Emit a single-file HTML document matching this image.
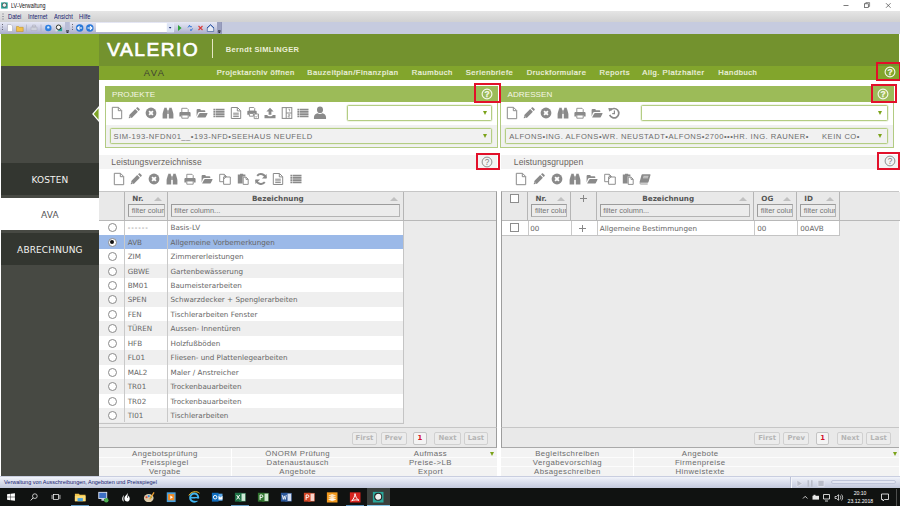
<!DOCTYPE html>
<html lang="de"><head><meta charset="utf-8"><title>LV-Verwaltung</title>
<style>
html,body{margin:0;padding:0;}
body{width:900px;height:506px;position:relative;overflow:hidden;background:#fff;font-family:"Liberation Sans",sans-serif;}
div,span,svg{position:absolute;box-sizing:border-box;}
.ic{overflow:visible}
.t{white-space:nowrap;line-height:1;}
/* windows chrome */
#title{left:0;top:0;width:900px;height:11px;background:#fff;}
#title .t{left:10.9px;top:2.6px;font-size:6.5px;color:#111;transform:scaleX(.83);transform-origin:0 0}
#menu{left:0;top:10.8px;width:900px;height:11px;background:linear-gradient(#e5e5e5,#d1d1d1);}
#menu .t{top:3px;font-size:6.3px;color:#14206e;transform:scaleX(.91);transform-origin:0 0}
#tool{left:0;top:21.7px;width:900px;height:12px;background:#c6cbdf;}
#tool .seg{left:0;top:0;width:221.5px;height:12px;background:linear-gradient(#e6e8f5,#cdd0e4 45%,#a9acc9);border-right:1px solid #8a8fae}
#combo{left:96px;top:1.1px;width:78px;height:9.4px;background:#fff;}
/* header */
#sgreen{left:1px;top:33.7px;width:97.7px;height:32px;background:#82a62b;}
#head{left:98.7px;top:33.7px;width:800.3px;height:32px;background:#73922e;}
#logo{left:107.3px;top:38.8px;font-size:19.2px;color:#fff;letter-spacing:1.45px;-webkit-text-stroke:.7px #fff;line-height:22px;white-space:nowrap;}
#vline{left:212.3px;top:39.3px;width:1px;height:19px;background:#e6e6c4;}
#user{left:225.7px;top:45.6px;font-size:7.5px;font-weight:bold;color:#ecefd8;letter-spacing:.36px;}
#nav{left:98.7px;top:65.6px;width:800.3px;height:14.2px;background:#82a52c;}
#navava{left:143.7px;top:69.2px;font-size:9.3px;color:#3e4132;letter-spacing:1.5px;}
.nv{top:68.9px;font-size:7.6px;color:#f0f3e0;letter-spacing:.56px;white-space:nowrap;line-height:1;-webkit-text-stroke:.2px #f0f3e0;}
/* sidebar */
#side{left:1px;top:65.6px;width:97.7px;height:410px;background:#474943;}
.sb{left:1px;width:97.7px;height:32px;background:#333630;color:#f4f4f0;font-family:"DejaVu Sans","Liberation Sans",sans-serif;font-size:9px;text-align:center;line-height:34.2px;letter-spacing:.12px;text-indent:.12px}
.sb.act{background:#fff;color:#555;}
/* panels */
.ph{height:15.5px;background:#9cbb58;}
.ph .t{left:7px;top:4.9px;font-size:8.1px;color:#f4f6e6;letter-spacing:.05px;}
.pb{border:1px solid #b2cb82;border-top:none;background:#fff;}
.prow{left:0;right:0;bottom:0;background:#f1f1f1;}
.selx{height:15.5px;border:1px solid #b4cd84;border-radius:1.6px;background:#fff;box-shadow:0 0 0 .6px #e2ebcf;}
.selx.g{background:#f1f1f1}
.selx .t{left:3px;top:3.7px;font-size:7.6px;color:#6c6c6c;letter-spacing:.5px;}
.arr{width:0;height:0;border-left:2.9px solid transparent;border-right:2.9px solid transparent;border-top:4.7px solid #7ba31a;}
.red{border:2.3px solid #e2102a;z-index:5}
.lab{height:14px;background:#f3f3f3;}
.lab .t{top:3px;font-size:8.5px;color:#6a645e;letter-spacing:.12px;}
/* tables */
.tbl{background:#ebebeb;border-top:1.3px solid #c6c6c6;}
.th{z-index:2;background:#e9e9e9;border-right:1px solid #b5b5b5;border-bottom:1.3px solid #b8b8b8;top:0;height:29.4px;}
.th b{position:absolute;top:3.1px;font-family:"DejaVu Sans","Liberation Sans",sans-serif;font-size:7.2px;color:#555;line-height:1;white-space:nowrap;}
.sort{width:0;height:0;border-left:4px solid transparent;border-right:4px solid transparent;border-bottom:4.2px solid #c0c0c0;top:5.4px;}
.fi{top:12px;height:13px;border:1px solid #9c9c9c;border-right-color:#b4b4b4;border-bottom-color:#b4b4b4;background:#ececec;overflow:hidden;}
.fi .t{left:2.6px;top:2.1px;font-size:7.4px;color:#757575;}
.row{left:0;width:304.5px;}
.row.wh{background:#fff} .row.alt{background:#efefef} .row.sel{background:#9bb9e8}
.row span.c1,.row span.c2{top:3.7px;font-family:"DejaVu Sans","Liberation Sans",sans-serif;font-size:7.2px;color:#666;line-height:1;white-space:nowrap;}
.row .c1{left:29.2px} .row .c2{left:72px}
.row::before{content:"";position:absolute;left:25.3px;top:0;bottom:0;width:1px;background:#c9c9c9}
.row::after{content:"";position:absolute;left:68.4px;top:0;bottom:0;width:1px;background:#c9c9c9}
.radio{left:9.1px;top:2.6px;width:9px;height:9px;border-radius:50%;border:1px solid #8a8a8a;background:#fff;}
.radio.on::after{content:"";position:absolute;left:1.3px;top:1.3px;width:4.4px;height:4.4px;border-radius:50%;background:#111}
.plus{position:absolute;width:7px;height:7px;background:linear-gradient(#878787,#878787) 0 2.8px/7px 1.4px no-repeat,linear-gradient(#878787,#878787) 2.8px 0/1.4px 7px no-repeat}
.cb{width:9px;height:9px;border:1px solid #8d8d8d;background:#fff;}
.pgr{height:20.5px;background:#e9e9e9;border-top:1.5px solid #c6c6c6;border-bottom:1.4px solid #a9a9a9;}
.pg{top:5.4px;height:12.2px;border:1px solid #d0d0d0;border-radius:2px;background:#ececec;color:#b4b4b4;font-family:"DejaVu Sans","Liberation Sans",sans-serif;font-weight:bold;font-size:6.9px;text-align:center;line-height:10.4px;}
.pg.cur{color:#d3122a;background:#f4f4f4;border-color:#c4c4c4}
.bl{height:9px;font-size:7.8px;line-height:9.3px;color:#6c6c6c;letter-spacing:.42px;text-align:center;white-space:nowrap;}
.blbg{height:9px;background:#f3f3f3;}
.rt{top:4.6px;font-family:"DejaVu Sans","Liberation Sans",sans-serif;font-size:7.2px;color:#666}
/* status + taskbar */
#status{left:0;top:475.5px;width:900px;height:12.8px;background:linear-gradient(#f2f4fa,#dfe3f0 35%,#c3c9dd);border-top:1px solid #c9cee0;}
#status .t{left:4px;top:3.6px;font-size:5.5px;color:#14206e;}
#task{left:0;top:488.2px;width:900px;height:17.8px;background:#101211;}
.tray{color:#fff;font-size:5.1px;white-space:nowrap;line-height:1;}
</style></head><body>

<div id="title"><svg class="ic" style="left:1.3px;top:2px" width="6.8" height="6.6" viewBox="0 0 8 8"><rect x="0" y=".5" width="8" height="7.5" fill="#2aa79b"/><circle cx="4" cy="3.8" r="2.6" fill="#f2f2f2" stroke="#333" stroke-width=".8"/></svg><span class="t">LV-Verwaltung</span>
<svg class="ic" style="left:838px;top:0" width="62" height="11" viewBox="0 0 62 11"><path d="M5.5 5.5h5" stroke="#444" stroke-width=".7"/><rect x="26.5" y="3.8" width="3.8" height="3.8" fill="none" stroke="#444" stroke-width=".7"/><path d="M27.8 3.8v-1.2h3.8v3.8h-1.2" fill="none" stroke="#444" stroke-width=".6"/><path d="M48 3.2l4.6 4.6M52.6 3.2l-4.6 4.6" stroke="#444" stroke-width=".7"/></svg></div>
<div id="menu"><span class="t" style="left:8px">Datei</span><span class="t" style="left:27.8px">Internet</span><span class="t" style="left:54px">Ansicht</span><span class="t" style="left:78.8px">Hilfe</span>
<svg class="ic" style="left:1.5px;top:2px" width="2" height="8" viewBox="0 0 2 8"><path d="M1 .5v1M1 3v1M1 5.5v1" stroke="#667" stroke-width="1"/></svg></div>
<div id="tool"><div class="seg"></div><div id="combo"></div>
<svg class="ic" style="left:0;top:0" width="225" height="12" viewBox="0 0 225 12">
<path d="M2.5 2v1M2.5 4.5v1M2.5 7v1" stroke="#667" stroke-width="1"/>
<path d="M7.5 2.5h3.5l1.5 1.5v5.5h-5z" fill="#fff" stroke="#aab" stroke-width=".6"/>
<path d="M16.5 4.5h2l.7.8h4v4.2h-6.7z" fill="#f1c04a" stroke="#b98a1e" stroke-width=".5"/>
<path d="M26.5 2.5v7M41 2.5v7" stroke="#a9aec6" stroke-width=".7"/>
<path d="M31 5h6v3.5h-6zM32.5 3h3v2h-3z" fill="#cfd2dc" stroke="#aab" stroke-width=".5"/>
<circle cx="48.3" cy="6" r="3.2" fill="#2f7fe0"/><circle cx="48.3" cy="5.4" r="1.2" fill="#d8ecff"/>
<rect x="55.5" y="2.3" width="6.6" height="7" fill="#dfe3e3"/><path d="M62.1 5v4.3h-5z" fill="#2aa79b"/><circle cx="58.6" cy="5.3" r="2.3" fill="#f4f4f4" stroke="#222" stroke-width=".9"/>
<rect x="65" y="0" width="4.8" height="12" fill="#b9bdd6"/><path d="M66 8.5h3M66.3 9.7l1.2 1.3 1.2-1.3z" stroke="#223" stroke-width=".6" fill="#223"/>
<path d="M72.5 2v1M72.5 4.5v1M72.5 7v1" stroke="#667" stroke-width="1"/>
<circle cx="79.7" cy="6" r="3.7" fill="#2a78d8"/><path d="M82 6h-4.2M79.5 4.2l-1.9 1.8 1.9 1.8" stroke="#fff" stroke-width="1.1" fill="none"/>
<circle cx="89.8" cy="6" r="3.7" fill="#2a78d8"/><path d="M87.5 6h4.2M90 4.2l1.9 1.8-1.9 1.8" stroke="#fff" stroke-width="1.1" fill="none"/>
<rect x="166.8" y="1.2" width="7" height="9.2" fill="#dde4f5"/><path d="M168.8 5.1h2.6l-1.3 1.7z" fill="#1a2a6e"/>
<path d="M178 3l3.6 3-3.6 3z" fill="#2fa23a"/>
<path d="M188 5.5l1.6-2.3.3 1.5h2M192.5 6.5l-1.6 2.3-.3-1.5" stroke="#2a6fd6" stroke-width=".9" fill="none"/>
<path d="M198.5 4l4 4M202.5 4l-4 4" stroke="#d83a3a" stroke-width="1.1"/>
<path d="M207.3 6l3.2-3 3.2 3v3.5h-6.4z" fill="#e8ecf6" stroke="#44629c" stroke-width=".7"/><path d="M207 6l3.5-3.3 3.5 3.3" stroke="#2a55a8" stroke-width="1" fill="none"/>
<rect x="217" y="0" width="4.5" height="12" fill="#9aa0c0"/><path d="M218 8.5h2.6M218.2 9.7l1.1 1.2 1.1-1.2z" stroke="#223" stroke-width=".6" fill="#223"/>
</svg></div>

<div id="sgreen"></div>
<div id="head"></div>
<div id="logo">VALERIO</div>
<div id="vline"></div>
<div id="user" class="t">Berndt SIMLINGER</div>
<div id="side"></div>
<div id="nav"></div>
<div id="navava" class="t">AVA</div>
<span class="nv" style="left:216.7px">Projektarchiv öffnen</span>
<span class="nv" style="left:307.3px">Bauzeitplan/Finanzplan</span>
<span class="nv" style="left:411.7px">Raumbuch</span>
<span class="nv" style="left:465.7px">Serienbriefe</span>
<span class="nv" style="left:526.7px">Druckformulare</span>
<span class="nv" style="left:599.5px">Reports</span>
<span class="nv" style="left:642.3px">Allg. Platzhalter</span>
<span class="nv" style="left:718.3px">Handbuch</span>
<svg class="ic" style="left:884px;top:66.1px" width="12" height="12" viewBox="0 0 12 12"><circle cx="6" cy="6" r="4.9" fill="none" stroke="#f4f6e6" stroke-width="1.15"/><text x="6" y="8.9" text-anchor="middle" font-family="Liberation Sans, sans-serif" font-weight="bold" font-size="8.4" fill="#f4f6e6" stroke="#f4f6e6" stroke-width=".25">?</text></svg>
<div class="red" style="left:876px;top:62px;width:24.5px;height:18.599999999999994px"></div>

<div class="sb" style="top:163px">KOSTEN</div>
<div class="sb act" style="top:198px">AVA</div>
<div class="sb" style="top:233px">ABRECHNUNG</div>
<svg class="ic" style="left:90.5px;top:105px" width="9" height="18" viewBox="0 0 9 18"><path d="M8.2 1.6l-6.3 7.4 6.3 7.4z" fill="#7ea326" stroke="#fff" stroke-width="1.2"/></svg>

<!-- PROJEKTE panel -->
<div class="ph" style="left:105px;top:86px;width:393px"><span class="t">PROJEKTE</span></div>
<div class="pb" style="left:105px;top:101.5px;width:393px;height:46.2px"><div class="prow" style="top:23.4px"></div></div>
<svg class="ic" style="left:111.2px;top:107px" width="12" height="12" viewBox="0 0 12 12"><path d="M1.3 .3h6.2l3.2 3.2v8.2h-9.4z" fill="#fff" stroke="#8a8a8a" stroke-width="1"/><path d="M7.3 .5v3.2h3.2" fill="none" stroke="#8a8a8a" stroke-width="1"/></svg>
<svg class="ic" style="left:128.13px;top:107px" width="12" height="12" viewBox="0 0 12 12"><path d="M.7 11.3l.6-3.3 5.9-5.9 2.7 2.7-5.9 5.9z" fill="#8a8a8a"/><path d="M8 1.3l.9-.9c.3-.3.8-.3 1.1 0l1.6 1.6c.3.3.3.8 0 1.1l-.9.9z" fill="#8a8a8a"/><path d="M1.3 9l1.7 1.7" stroke="#fff" stroke-width=".6"/></svg>
<svg class="ic" style="left:145.06px;top:107px" width="12" height="12" viewBox="0 0 12 12"><circle cx="6" cy="6" r="5.4" fill="#8a8a8a"/><path d="M4.1 4.1l3.8 3.8M7.9 4.1l-3.8 3.8" stroke="#fff" stroke-width="1.9" stroke-linecap="butt"/></svg>
<svg class="ic" style="left:161.99px;top:107px" width="12" height="12" viewBox="0 0 12 12"><path d="M2.2 .8h2.6v1.4h.4v9.2h-4.6v-4.2c0-1.8 1-3.4 1.2-5h.4zM7.2 .8h2.6v1.4h.4c.2 1.6 1.2 3.2 1.2 5v4.2h-4.6v-9.2h.4z" fill="#8a8a8a"/><rect x="5.2" y="3.3" width="1.6" height="3.6" fill="#8a8a8a"/></svg>
<svg class="ic" style="left:178.92px;top:107px" width="12" height="12" viewBox="0 0 12 12"><path d="M2.8 1.3h5.2l1.2 1.2v3.3h-6.4z" fill="#fff" stroke="#8a8a8a" stroke-width=".9"/><path d="M.4 6.2c0-.7.5-1.2 1.2-1.2h8.8c.7 0 1.2.5 1.2 1.2v3.4h-2v-1.6h-7.2v1.6h-2z" fill="#8a8a8a"/><path d="M2.8 8h6.4v3.2h-6.4z" fill="#fff" stroke="#8a8a8a" stroke-width=".9"/></svg>
<svg class="ic" style="left:195.85px;top:107px" width="12" height="12" viewBox="0 0 12 12"><path d="M.6 9.4v-6.4c0-.5.4-.9.9-.9h2.4c.5 0 .9.4.9.9v.2h3.6c.5 0 .9.4.9.9v.8h-5.8c-.6 0-1.2.3-1.5.9z" fill="#8a8a8a"/><path d="M1.2 10.3l1.9-3.6c.2-.4.6-.7 1.1-.7h6.9c.4 0 .6.3.4.7l-1.7 3.2c-.2.4-.6.7-1.1.7h-7.2c-.3 0-.4-.1-.3-.3z" fill="#8a8a8a"/></svg>
<svg class="ic" style="left:212.78px;top:107px" width="12" height="12" viewBox="0 0 12 12"><path d="M.4 1.7h1.6v1.8h-1.6zM.4 3.95h1.6v1.8h-1.6zM.4 6.2h1.6v1.8h-1.6zM.4 8.45h1.6v1.8h-1.6zM2.5 1.7h9v1.8h-9zM2.5 3.95h9v1.8h-9zM2.5 6.2h9v1.8h-9zM2.5 8.45h9v1.8h-9z" fill="#8a8a8a"/></svg>
<svg class="ic" style="left:229.71px;top:107px" width="12" height="12" viewBox="0 0 12 12"><path d="M1.3 .5h6.2l3.2 3.2v7.8h-9.4z" fill="#fff" stroke="#8a8a8a" stroke-width="1"/><path d="M7.3 .7v3.2h3.2" fill="none" stroke="#8a8a8a" stroke-width="1"/><path d="M3.2 6.2h5.6M3.2 7.9h5.6M3.2 9.6h5.6" stroke="#8a8a8a" stroke-width="1"/></svg>
<svg class="ic" style="left:246.64px;top:107px" width="12" height="12" viewBox="0 0 12 12"><path d="M2.4 .5h4.4l.9.9v2.8h-5.3z" fill="#fff" stroke="#8a8a8a" stroke-width=".9"/><path d="M.3 4.8c0-.6.4-1 1-1h7.4c.6 0 1 .4 1 1v3h-1.7v-1.3h-6v1.3h-1.7z" fill="#8a8a8a"/><path d="M2.4 6.5h4v2.7h-4z" fill="#fff" stroke="#8a8a8a" stroke-width=".9"/><path d="M7.2 7h4.3v4.6h-4.3z" fill="#fff" stroke="#8a8a8a" stroke-width=".9"/><path d="M8.3 9.4l.9.9 1.5-1.8" fill="none" stroke="#8a8a8a" stroke-width=".8"/></svg>
<svg class="ic" style="left:263.57px;top:107px" width="12" height="12" viewBox="0 0 12 12"><path d="M6 .8l3.6 3.8h-2.2v3.2h-2.8v-3.2h-2.2z" fill="#8a8a8a"/><path d="M.5 8h2.7c.3 1 1.3 1.3 2.8 1.3s2.5-.3 2.8-1.3h2.7v3.3h-11z" fill="#8a8a8a"/></svg>
<svg class="ic" style="left:280.5px;top:107px" width="12" height="12" viewBox="0 0 12 12"><rect x="1.2" y=".6" width="9.6" height="10.8" fill="#fff" stroke="#8a8a8a" stroke-width="1"/><path d="M5.2 .6v10.8M5.2 6h5.6" stroke="#8a8a8a" stroke-width="1"/><path d="M7.4 2.2h1.2v2.2M7.2 7.6h1.6v1.2h-1.6v1.2h1.8" fill="none" stroke="#8a8a8a" stroke-width=".7"/></svg>
<svg class="ic" style="left:297.43px;top:107px" width="12" height="12" viewBox="0 0 12 12"><path d="M.4 1.7h1.6v1.8h-1.6zM.4 3.95h1.6v1.8h-1.6zM.4 6.2h1.6v1.8h-1.6zM.4 8.45h1.6v1.8h-1.6zM2.5 1.7h9v1.8h-9zM2.5 3.95h9v1.8h-9zM2.5 6.2h9v1.8h-9zM2.5 8.45h9v1.8h-9z" fill="#8a8a8a"/></svg>
<svg class="ic" style="left:314.36px;top:107px" width="12" height="12" viewBox="0 0 12 12"><g transform="translate(6 6) scale(1.12) translate(-6 -6.2)"><ellipse cx="6" cy="3.3" rx="2.7" ry="3" fill="#8a8a8a"/><path d="M.6 11.6v-1.6c0-2 1.6-3.2 3.2-3.5.6.5 1.4.7 2.2.7s1.6-.2 2.2-.7c1.6.3 3.2 1.5 3.2 3.5v1.6z" fill="#8a8a8a"/></g></svg>
<div class="selx" style="left:347.2px;top:105.3px;width:145px"><div class="arr" style="right:4.6px;top:4.5px"></div></div>
<div class="selx g" style="left:109.6px;top:128.1px;width:382.6px"><span class="t">SIM-193-NFDN01__•193-NFD•SEEHAUS NEUFELD</span><div class="arr" style="right:4.6px;top:4.5px"></div></div>
<svg class="ic" style="left:481.4px;top:87.8px" width="12" height="12" viewBox="0 0 12 12"><circle cx="6" cy="6" r="4.9" fill="none" stroke="#f6f8ea" stroke-width="1.15"/><text x="6" y="8.9" text-anchor="middle" font-family="Liberation Sans, sans-serif" font-weight="bold" font-size="8.4" fill="#f6f8ea" stroke="#f6f8ea" stroke-width=".25">?</text></svg>
<div class="red" style="left:473.6px;top:83.4px;width:27.19999999999999px;height:20.099999999999994px"></div>

<!-- ADRESSEN panel -->
<div class="ph" style="left:499.9px;top:86px;width:394.6px"><span class="t" style="left:7.6px">ADRESSEN</span></div>
<div class="pb" style="left:499.9px;top:101.5px;width:394.6px;height:46.2px"><div class="prow" style="top:23.4px"></div></div>
<svg class="ic" style="left:506.4px;top:107px" width="12" height="12" viewBox="0 0 12 12"><path d="M1.3 .3h6.2l3.2 3.2v8.2h-9.4z" fill="#fff" stroke="#8a8a8a" stroke-width="1"/><path d="M7.3 .5v3.2h3.2" fill="none" stroke="#8a8a8a" stroke-width="1"/></svg>
<svg class="ic" style="left:523.3px;top:107px" width="12" height="12" viewBox="0 0 12 12"><path d="M.7 11.3l.6-3.3 5.9-5.9 2.7 2.7-5.9 5.9z" fill="#8a8a8a"/><path d="M8 1.3l.9-.9c.3-.3.8-.3 1.1 0l1.6 1.6c.3.3.3.8 0 1.1l-.9.9z" fill="#8a8a8a"/><path d="M1.3 9l1.7 1.7" stroke="#fff" stroke-width=".6"/></svg>
<svg class="ic" style="left:540.2px;top:107px" width="12" height="12" viewBox="0 0 12 12"><circle cx="6" cy="6" r="5.4" fill="#8a8a8a"/><path d="M4.1 4.1l3.8 3.8M7.9 4.1l-3.8 3.8" stroke="#fff" stroke-width="1.9" stroke-linecap="butt"/></svg>
<svg class="ic" style="left:557.1px;top:107px" width="12" height="12" viewBox="0 0 12 12"><path d="M2.2 .8h2.6v1.4h.4v9.2h-4.6v-4.2c0-1.8 1-3.4 1.2-5h.4zM7.2 .8h2.6v1.4h.4c.2 1.6 1.2 3.2 1.2 5v4.2h-4.6v-9.2h.4z" fill="#8a8a8a"/><rect x="5.2" y="3.3" width="1.6" height="3.6" fill="#8a8a8a"/></svg>
<svg class="ic" style="left:574px;top:107px" width="12" height="12" viewBox="0 0 12 12"><path d="M2.8 1.3h5.2l1.2 1.2v3.3h-6.4z" fill="#fff" stroke="#8a8a8a" stroke-width=".9"/><path d="M.4 6.2c0-.7.5-1.2 1.2-1.2h8.8c.7 0 1.2.5 1.2 1.2v3.4h-2v-1.6h-7.2v1.6h-2z" fill="#8a8a8a"/><path d="M2.8 8h6.4v3.2h-6.4z" fill="#fff" stroke="#8a8a8a" stroke-width=".9"/></svg>
<svg class="ic" style="left:590.9px;top:107px" width="12" height="12" viewBox="0 0 12 12"><path d="M.6 9.4v-6.4c0-.5.4-.9.9-.9h2.4c.5 0 .9.4.9.9v.2h3.6c.5 0 .9.4.9.9v.8h-5.8c-.6 0-1.2.3-1.5.9z" fill="#8a8a8a"/><path d="M1.2 10.3l1.9-3.6c.2-.4.6-.7 1.1-.7h6.9c.4 0 .6.3.4.7l-1.7 3.2c-.2.4-.6.7-1.1.7h-7.2c-.3 0-.4-.1-.3-.3z" fill="#8a8a8a"/></svg>
<svg class="ic" style="left:607.8px;top:107px" width="12" height="12" viewBox="0 0 12 12"><path d="M2.3 3.4a4.7 4.7 0 1 1 -.6 4.5" fill="none" stroke="#8a8a8a" stroke-width="1.7"/><path d="M.3 .9l4.3 .3-3.3 3.6z" fill="#8a8a8a"/><path d="M6.4 3.6v3h-2.2" fill="none" stroke="#8a8a8a" stroke-width="1.2"/></svg>
<div class="selx" style="left:641.2px;top:105.3px;width:246.5px"><div class="arr" style="right:4.6px;top:4.5px"></div></div>
<div class="selx g" style="left:505.2px;top:128.1px;width:382.5px"><span class="t">ALFONS•ING. ALFONS•WR. NEUSTADT•ALFONS•2700•••HR. ING. RAUNER•&nbsp;&nbsp;&nbsp;&nbsp;&nbsp;KEIN CO•</span><div class="arr" style="right:4.6px;top:4.5px"></div></div>
<svg class="ic" style="left:877px;top:87.6px" width="12" height="12" viewBox="0 0 12 12"><circle cx="6" cy="6" r="4.9" fill="none" stroke="#f6f8ea" stroke-width="1.15"/><text x="6" y="8.9" text-anchor="middle" font-family="Liberation Sans, sans-serif" font-weight="bold" font-size="8.4" fill="#f6f8ea" stroke="#f6f8ea" stroke-width=".25">?</text></svg>
<div class="red" style="left:871.4px;top:83.5px;width:25.600000000000023px;height:19.299999999999997px"></div>

<!-- Leistungsverzeichnisse -->
<div class="lab" style="left:98.5px;top:154.7px;width:398.5px"><span class="t" style="left:12.8px">Leistungsverzeichnisse</span></div>
<svg class="ic" style="left:481.2px;top:155.5px" width="12" height="12" viewBox="0 0 12 12"><circle cx="6" cy="6" r="4.9" fill="none" stroke="#7c7c7c" stroke-width=".85"/><text x="6" y="8.8" text-anchor="middle" font-family="Liberation Sans, sans-serif" font-size="8.2" fill="#7c7c7c">?</text></svg>
<div class="red" style="left:475.5px;top:153px;width:24.69999999999999px;height:17.19999999999999px"></div>
<svg class="ic" style="left:112.6px;top:172.6px" width="12" height="12" viewBox="0 0 12 12"><path d="M1.3 .3h6.2l3.2 3.2v8.2h-9.4z" fill="#fff" stroke="#8a8a8a" stroke-width="1"/><path d="M7.3 .5v3.2h3.2" fill="none" stroke="#8a8a8a" stroke-width="1"/></svg>
<svg class="ic" style="left:130.35px;top:172.6px" width="12" height="12" viewBox="0 0 12 12"><path d="M.7 11.3l.6-3.3 5.9-5.9 2.7 2.7-5.9 5.9z" fill="#8a8a8a"/><path d="M8 1.3l.9-.9c.3-.3.8-.3 1.1 0l1.6 1.6c.3.3.3.8 0 1.1l-.9.9z" fill="#8a8a8a"/><path d="M1.3 9l1.7 1.7" stroke="#fff" stroke-width=".6"/></svg>
<svg class="ic" style="left:148.1px;top:172.6px" width="12" height="12" viewBox="0 0 12 12"><circle cx="6" cy="6" r="5.4" fill="#8a8a8a"/><path d="M4.1 4.1l3.8 3.8M7.9 4.1l-3.8 3.8" stroke="#fff" stroke-width="1.9" stroke-linecap="butt"/></svg>
<svg class="ic" style="left:165.85px;top:172.6px" width="12" height="12" viewBox="0 0 12 12"><path d="M2.2 .8h2.6v1.4h.4v9.2h-4.6v-4.2c0-1.8 1-3.4 1.2-5h.4zM7.2 .8h2.6v1.4h.4c.2 1.6 1.2 3.2 1.2 5v4.2h-4.6v-9.2h.4z" fill="#8a8a8a"/><rect x="5.2" y="3.3" width="1.6" height="3.6" fill="#8a8a8a"/></svg>
<svg class="ic" style="left:183.6px;top:172.6px" width="12" height="12" viewBox="0 0 12 12"><path d="M2.8 1.3h5.2l1.2 1.2v3.3h-6.4z" fill="#fff" stroke="#8a8a8a" stroke-width=".9"/><path d="M.4 6.2c0-.7.5-1.2 1.2-1.2h8.8c.7 0 1.2.5 1.2 1.2v3.4h-2v-1.6h-7.2v1.6h-2z" fill="#8a8a8a"/><path d="M2.8 8h6.4v3.2h-6.4z" fill="#fff" stroke="#8a8a8a" stroke-width=".9"/></svg>
<svg class="ic" style="left:201.35px;top:172.6px" width="12" height="12" viewBox="0 0 12 12"><path d="M.6 9.4v-6.4c0-.5.4-.9.9-.9h2.4c.5 0 .9.4.9.9v.2h3.6c.5 0 .9.4.9.9v.8h-5.8c-.6 0-1.2.3-1.5.9z" fill="#8a8a8a"/><path d="M1.2 10.3l1.9-3.6c.2-.4.6-.7 1.1-.7h6.9c.4 0 .6.3.4.7l-1.7 3.2c-.2.4-.6.7-1.1.7h-7.2c-.3 0-.4-.1-.3-.3z" fill="#8a8a8a"/></svg>
<svg class="ic" style="left:219.1px;top:172.6px" width="12" height="12" viewBox="0 0 12 12"><path d="M.7 1.3h4.6l2 2v5.4h-6.6z" fill="#fff" stroke="#8a8a8a" stroke-width=".95"/><path d="M5.3 1.5v2h2" fill="none" stroke="#8a8a8a" stroke-width=".8"/><path d="M4.6 4h6.7v7.3h-6.7z" fill="#fff" stroke="#8a8a8a" stroke-width=".95"/><path d="M4.6 6.4l2.4-2.4" fill="none" stroke="#8a8a8a" stroke-width=".8"/></svg>
<svg class="ic" style="left:236.85px;top:172.6px" width="12" height="12" viewBox="0 0 12 12"><path d="M.8 1.6h2.2v-.8h3.2v.8h2.2v2h-2.8v6.8h-4.8z" fill="#8a8a8a"/><path d="M6.2 4.2h3l2 2v5.2h-5z" fill="#fff" stroke="#8a8a8a" stroke-width=".95"/><path d="M9 4.4v2h2" fill="none" stroke="#8a8a8a" stroke-width=".9"/></svg>
<svg class="ic" style="left:254.6px;top:172.6px" width="12" height="12" viewBox="0 0 12 12"><path d="M10.8 5.2a4.9 4.9 0 0 0 -8.6 -2.4" fill="none" stroke="#8a8a8a" stroke-width="2"/><path d="M11.6 .9v4.7h-4.7z" fill="#8a8a8a"/><path d="M1.2 6.8a4.9 4.9 0 0 0 8.6 2.4" fill="none" stroke="#8a8a8a" stroke-width="2"/><path d="M.4 11.1v-4.7h4.7z" fill="#8a8a8a"/></svg>
<svg class="ic" style="left:272.35px;top:172.6px" width="12" height="12" viewBox="0 0 12 12"><path d="M1.3 .5h6.2l3.2 3.2v7.8h-9.4z" fill="#fff" stroke="#8a8a8a" stroke-width="1"/><path d="M7.3 .7v3.2h3.2" fill="none" stroke="#8a8a8a" stroke-width="1"/><path d="M3.2 6.2h5.6M3.2 7.9h5.6M3.2 9.6h5.6" stroke="#8a8a8a" stroke-width="1"/></svg>
<svg class="ic" style="left:290.1px;top:172.6px" width="12" height="12" viewBox="0 0 12 12"><path d="M.4 1.7h1.6v1.8h-1.6zM.4 3.95h1.6v1.8h-1.6zM.4 6.2h1.6v1.8h-1.6zM.4 8.45h1.6v1.8h-1.6zM2.5 1.7h9v1.8h-9zM2.5 3.95h9v1.8h-9zM2.5 6.2h9v1.8h-9zM2.5 8.45h9v1.8h-9z" fill="#8a8a8a"/></svg>
<div class="tbl" style="left:98.5px;top:191.1px;width:398.6px;height:236.4px;border-right:1.2px solid #9d9d9d">
 <div class="th" style="left:0;width:26.3px"></div>
 <div class="th" style="left:26.3px;width:43.1px"><b style="left:7.5px">Nr.</b><div class="sort" style="left:29.3px"></div><div class="fi" style="left:3.4px;width:36.4px"><span class="t">filter column...</span></div></div>
 <div class="th" style="left:69.4px;width:236px"><b style="left:84px">Bezeichnung</b><div class="sort" style="left:221.7px"></div><div class="fi" style="left:2.8px;width:229.5px"><span class="t">filter column...</span></div></div>
 <div class="th" style="left:305.4px;width:92px;border-right:none"></div>
</div>
<div style="left:98.5px;top:0;width:306px;height:0">
<div class="row wh" style="top:220px;height:15px"><span class="radio"></span><span class="c1"><span style="position:static;letter-spacing:.9px;color:#707070">------</span></span><span class="c2">Basis-LV</span></div>
<div class="row sel" style="top:235px;height:14px"><span class="radio on"></span><span class="c1">AVB</span><span class="c2">Allgemeine Vorbemerkungen</span></div>
<div class="row wh" style="top:249px;height:15px"><span class="radio"></span><span class="c1">ZIM</span><span class="c2">Zimmererleistungen</span></div>
<div class="row alt" style="top:264px;height:14px"><span class="radio"></span><span class="c1">GBWE</span><span class="c2">Gartenbewässerung</span></div>
<div class="row wh" style="top:278px;height:14px"><span class="radio"></span><span class="c1">BM01</span><span class="c2">Baumeisterarbeiten</span></div>
<div class="row alt" style="top:292px;height:15px"><span class="radio"></span><span class="c1">SPEN</span><span class="c2">Schwarzdecker + Spenglerarbeiten</span></div>
<div class="row wh" style="top:307px;height:14px"><span class="radio"></span><span class="c1">FEN</span><span class="c2">Tischlerarbeiten Fenster</span></div>
<div class="row alt" style="top:321px;height:15px"><span class="radio"></span><span class="c1">TÜREN</span><span class="c2">Aussen- Innentüren</span></div>
<div class="row wh" style="top:336px;height:14px"><span class="radio"></span><span class="c1">HFB</span><span class="c2">Holzfußböden</span></div>
<div class="row alt" style="top:350px;height:15px"><span class="radio"></span><span class="c1">FL01</span><span class="c2">Fliesen- und Plattenlegearbeiten</span></div>
<div class="row wh" style="top:365px;height:14px"><span class="radio"></span><span class="c1">MAL2</span><span class="c2">Maler / Anstreicher</span></div>
<div class="row alt" style="top:379px;height:15px"><span class="radio"></span><span class="c1">TR01</span><span class="c2">Trockenbauarbeiten</span></div>
<div class="row wh" style="top:394px;height:14px"><span class="radio"></span><span class="c1">TR02</span><span class="c2">Trockenbauarbeiten</span></div>
<div class="row alt" style="top:408px;height:14px"><span class="radio"></span><span class="c1">TI01</span><span class="c2">Tischlerarbeiten</span></div>
</div>
<div style="left:98.5px;top:422.5px;width:305.5px;height:1px;background:#c4c4c4"></div>
<div style="left:403.4px;top:220px;width:1px;height:203px;background:#c4c4c4"></div>
<div class="pgr" style="left:98.5px;top:427px;width:398.6px;border-right:1.2px solid #9d9d9d">
</div>
<div style="left:0;top:427px;width:0;height:0"><span class="pg" style="left:351.5px;width:25.80000000000001px">First</span>
<span class="pg" style="left:380.5px;width:26px">Prev</span>
<span class="pg cur" style="left:413.3px;width:13.300000000000011px">1</span>
<span class="pg" style="left:434.4px;width:26.200000000000045px">Next</span>
<span class="pg" style="left:463.7px;width:24.400000000000034px">Last</span></div>

<!-- Leistungsgruppen -->
<div class="lab" style="left:501px;top:154.7px;width:398px"><span class="t" style="left:12.8px">Leistungsgruppen</span></div>
<svg class="ic" style="left:883.5px;top:155.3px" width="12" height="12" viewBox="0 0 12 12"><circle cx="6" cy="6" r="4.9" fill="none" stroke="#7c7c7c" stroke-width=".85"/><text x="6" y="8.8" text-anchor="middle" font-family="Liberation Sans, sans-serif" font-size="8.2" fill="#7c7c7c">?</text></svg>
<div class="red" style="left:876.6px;top:152.4px;width:23.899999999999977px;height:18px"></div>
<svg class="ic" style="left:515.4px;top:172.6px" width="12" height="12" viewBox="0 0 12 12"><path d="M1.3 .3h6.2l3.2 3.2v8.2h-9.4z" fill="#fff" stroke="#8a8a8a" stroke-width="1"/><path d="M7.3 .5v3.2h3.2" fill="none" stroke="#8a8a8a" stroke-width="1"/></svg>
<svg class="ic" style="left:533.12px;top:172.6px" width="12" height="12" viewBox="0 0 12 12"><path d="M.7 11.3l.6-3.3 5.9-5.9 2.7 2.7-5.9 5.9z" fill="#8a8a8a"/><path d="M8 1.3l.9-.9c.3-.3.8-.3 1.1 0l1.6 1.6c.3.3.3.8 0 1.1l-.9.9z" fill="#8a8a8a"/><path d="M1.3 9l1.7 1.7" stroke="#fff" stroke-width=".6"/></svg>
<svg class="ic" style="left:550.84px;top:172.6px" width="12" height="12" viewBox="0 0 12 12"><circle cx="6" cy="6" r="5.4" fill="#8a8a8a"/><path d="M4.1 4.1l3.8 3.8M7.9 4.1l-3.8 3.8" stroke="#fff" stroke-width="1.9" stroke-linecap="butt"/></svg>
<svg class="ic" style="left:568.56px;top:172.6px" width="12" height="12" viewBox="0 0 12 12"><path d="M2.2 .8h2.6v1.4h.4v9.2h-4.6v-4.2c0-1.8 1-3.4 1.2-5h.4zM7.2 .8h2.6v1.4h.4c.2 1.6 1.2 3.2 1.2 5v4.2h-4.6v-9.2h.4z" fill="#8a8a8a"/><rect x="5.2" y="3.3" width="1.6" height="3.6" fill="#8a8a8a"/></svg>
<svg class="ic" style="left:586.28px;top:172.6px" width="12" height="12" viewBox="0 0 12 12"><path d="M.6 9.4v-6.4c0-.5.4-.9.9-.9h2.4c.5 0 .9.4.9.9v.2h3.6c.5 0 .9.4.9.9v.8h-5.8c-.6 0-1.2.3-1.5.9z" fill="#8a8a8a"/><path d="M1.2 10.3l1.9-3.6c.2-.4.6-.7 1.1-.7h6.9c.4 0 .6.3.4.7l-1.7 3.2c-.2.4-.6.7-1.1.7h-7.2c-.3 0-.4-.1-.3-.3z" fill="#8a8a8a"/></svg>
<svg class="ic" style="left:604px;top:172.6px" width="12" height="12" viewBox="0 0 12 12"><path d="M.7 1.3h4.6l2 2v5.4h-6.6z" fill="#fff" stroke="#8a8a8a" stroke-width=".95"/><path d="M5.3 1.5v2h2" fill="none" stroke="#8a8a8a" stroke-width=".8"/><path d="M4.6 4h6.7v7.3h-6.7z" fill="#fff" stroke="#8a8a8a" stroke-width=".95"/><path d="M4.6 6.4l2.4-2.4" fill="none" stroke="#8a8a8a" stroke-width=".8"/></svg>
<svg class="ic" style="left:621.72px;top:172.6px" width="12" height="12" viewBox="0 0 12 12"><path d="M.8 1.6h2.2v-.8h3.2v.8h2.2v2h-2.8v6.8h-4.8z" fill="#8a8a8a"/><path d="M6.2 4.2h3l2 2v5.2h-5z" fill="#fff" stroke="#8a8a8a" stroke-width=".95"/><path d="M9 4.4v2h2" fill="none" stroke="#8a8a8a" stroke-width=".9"/></svg>
<svg class="ic" style="left:639.44px;top:172.6px" width="12" height="12" viewBox="0 0 12 12"><path d="M3.4 1.2h7.6c.4 0 .6.3.5.7l-2 7.1c-.1.4-.5.7-.9.7h-7.4c-.4 0-.7-.4-.6-.8l1.9-6.8c.1-.5.5-.9.9-.9z" fill="#8a8a8a"/><path d="M1 9.7c-.2.7.2 1.3.9 1.3h6.8" fill="none" stroke="#8a8a8a" stroke-width=".9"/><path d="M4.4 3.3h5M4 4.8h5" stroke="#fff" stroke-width=".6"/></svg>
<div class="tbl" style="left:500.6px;top:191.1px;width:398.4px;height:236.4px;border-left:1.2px solid #9d9d9d">
 <div class="th" style="left:0;width:26.3px"><div class="cb" style="left:8.4px;top:1.8px"></div></div>
 <div class="th" style="left:26.3px;width:42.9px"><b style="left:7.5px">Nr.</b><div class="sort" style="left:29.3px"></div><div class="fi" style="left:3.4px;width:36.2px"><span class="t">filter column...</span></div></div>
 <div class="th" style="left:69.2px;width:26px"><i class="plus" style="left:9.3px;top:2.7px"></i></div>
 <div class="th" style="left:95.2px;width:157px"><b style="left:45.5px">Bezeichnung</b><div class="sort" style="left:142.7px"></div><div class="fi" style="left:2.8px;width:150.5px"><span class="t">filter column...</span></div></div>
 <div class="th" style="left:252.2px;width:43px"><b style="left:7.5px">OG</b><div class="sort" style="left:29.3px"></div><div class="fi" style="left:3.4px;width:36.3px"><span class="t">filter column...</span></div></div>
 <div class="th" style="left:295.2px;width:42.8px"><b style="left:7.5px">ID</b><div class="sort" style="left:29.3px"></div><div class="fi" style="left:3.4px;width:36.1px"><span class="t">filter column...</span></div></div>
 <div class="th" style="left:338px;width:60px;border-right:none"></div>
</div>
<div id="rrow" style="left:501.8px;top:220.7px;width:338px;height:15.3px;background:#fff;border-bottom:1px solid #c4c4c4;border-right:1px solid #c4c4c4">
 <div class="cb" style="left:8.4px;top:2.6px"></div>
 <i style="position:absolute;left:26px;top:0;bottom:0;width:1px;background:#c9c9c9"></i>
 <i style="position:absolute;left:68.8px;top:0;bottom:0;width:1px;background:#c9c9c9"></i>
 <i style="position:absolute;left:94.8px;top:0;bottom:0;width:1px;background:#c9c9c9"></i>
 <i style="position:absolute;left:251.8px;top:0;bottom:0;width:1px;background:#c9c9c9"></i>
 <i style="position:absolute;left:294.8px;top:0;bottom:0;width:1px;background:#c9c9c9"></i>
 <span class="t rt" style="left:28.4px">00</span>
 <i class="plus" style="left:77.6px;top:4.1px"></i>
 <span class="t rt" style="left:98px">Allgemeine Bestimmungen</span>
 <span class="t rt" style="left:255.5px">00</span>
 <span class="t rt" style="left:298.5px">00AVB</span>
</div>
<div class="pgr" style="left:500.6px;top:427px;width:398.4px;border-left:1.2px solid #9d9d9d"></div>
<div style="left:0;top:427px;width:0;height:0"><span class="pg" style="left:754.2px;width:25.799999999999955px">First</span>
<span class="pg" style="left:783.2px;width:26px">Prev</span>
<span class="pg cur" style="left:816px;width:13.299999999999955px">1</span>
<span class="pg" style="left:837.0999999999999px;width:26.200000000000045px">Next</span>
<span class="pg" style="left:866.4px;width:24.399999999999977px">Last</span></div>

<!-- bottom links -->
<div style="left:98.5px;top:448.4px;width:398.5px;height:27.2px;background:#f3f3f3"></div>
<div style="left:501px;top:448.4px;width:398px;height:27.2px;background:#f3f3f3"></div>
<div style="left:98.5px;top:457.3px;width:800.5px;height:1px;background:#fcfcfc"></div>
<div style="left:98.5px;top:466.4px;width:800.5px;height:1px;background:#fcfcfc"></div>
<div style="left:497px;top:448.4px;width:4px;height:27.2px;background:#fff"></div>
<span class="bl" style="left:98.5px;width:132.8px;top:448.6px">Angebotsprüfung</span>
<span class="bl" style="left:98.5px;width:132.8px;top:457.6px">Preisspiegel</span>
<span class="bl" style="left:98.5px;width:132.8px;top:466.6px">Vergabe</span>
<span class="bl" style="left:231.3px;width:132.8px;top:448.6px">ÖNORM Prüfung</span>
<span class="bl" style="left:231.3px;width:132.8px;top:457.6px">Datenaustausch</span>
<span class="bl" style="left:231.3px;width:132.8px;top:466.6px">Angebote</span>
<span class="bl" style="left:364.1px;width:132.8px;top:448.6px">Aufmass</span>
<span class="bl" style="left:364.1px;width:132.8px;top:457.6px">Preise-&gt;LB</span>
<span class="bl" style="left:364.1px;width:132.8px;top:466.6px">Export</span>
<span class="bl" style="left:501px;width:132.8px;top:448.6px">Begleitschreiben</span>
<span class="bl" style="left:501px;width:132.8px;top:457.6px">Vergabevorschlag</span>
<span class="bl" style="left:501px;width:132.8px;top:466.6px">Absageschreiben</span>
<span class="bl" style="left:633.8px;width:132.8px;top:448.6px">Angebote</span>
<span class="bl" style="left:633.8px;width:132.8px;top:457.6px">Firmenpreise</span>
<span class="bl" style="left:633.8px;width:132.8px;top:466.6px">Hinweistexte</span>
<div style="left:230.8px;top:448.6px;width:1px;height:27px;background:#fff"></div>
<div style="left:633.4px;top:448.6px;width:1px;height:27px;background:#fff"></div>
<div class="arr" style="left:489.8px;top:451.5px"></div>
<div class="arr" style="left:892.5px;top:451.5px"></div>

<div id="status"><span class="t">Verwaltung von Ausschreibungen, Angeboten und Preisspiegel</span>
<div style="left:791px;top:0;width:1px;height:12px;background:#f4f6fb"></div><div style="left:790.2px;top:0;width:.8px;height:12px;background:#bcc2d6"></div>
<svg class="ic" style="left:792px;top:2px" width="36" height="9" viewBox="0 0 36 9"><path d="M5 1.2l5.5 3.3-5.5 3.3z" fill="#b9bdca" stroke="#e9ebf3" stroke-width=".6"/><path d="M16.3 1.2v6.6M19.8 1.2v6.6" stroke="#b9bdca" stroke-width="1.6"/><rect x="26" y="1.4" width="6" height="6" fill="#b9bdca" stroke="#e9ebf3" stroke-width=".6"/></svg>
<div style="left:831.3px;top:3.4px;width:65px;height:4.6px;border:1px solid #bfc5da;border-radius:2.3px;background:#e4e7f3"></div>
</div>
<div id="task">
<div style="left:366.5px;top:0;width:23px;height:17.8px;background:#3a3f3c"></div>
<div style="left:366.5px;top:17px;width:23px;height:1px;background:#86c5e8"></div>
<div style="left:71px;top:17px;width:18px;height:.8px;background:#5f95bd"></div>
<div style="left:231px;top:17px;width:18px;height:.8px;background:#5f95bd"></div>
<div style="left:346px;top:17px;width:18px;height:.8px;background:#5f95bd"></div>
</div>
<svg class="ic" style="left:6px;top:492.2px" width="10" height="10" viewBox="0 0 14 14"><path d="M1.5 3.2l4.8-.7v4.2h-4.8zM6.9 2.4l5.6-.8v5.1h-5.6zM1.5 7.3h4.8v4.2l-4.8-.7zM6.9 7.3h5.6v5.1l-5.6-.8z" fill="#fff"/></svg>
<svg class="ic" style="left:29px;top:492.2px" width="10" height="10" viewBox="0 0 14 14"><circle cx="8.2" cy="5.8" r="3.3" fill="none" stroke="#fff" stroke-width="1"/><path d="M5.9 8.2l-3.5 3.6" stroke="#fff" stroke-width="1.2"/></svg>
<svg class="ic" style="left:51px;top:492.2px" width="10" height="10" viewBox="0 0 14 14"><rect x="3.5" y="3.5" width="7" height="7" fill="none" stroke="#fff" stroke-width="1"/><path d="M1.5 4v6M12.5 4v6" stroke="#fff" stroke-width="1"/></svg>
<svg class="ic" style="left:73.8px;top:491px" width="12.4" height="12.4" viewBox="0 0 14 14"><path d="M1 3h4.5l1 1.2h6.5v7.3h-12z" fill="#f3c64b"/><path d="M1 5.5h12v6h-12z" fill="#fbdc7a"/><rect x="4" y="8" width="6" height="3.5" fill="#4aa3e0"/></svg>
<svg class="ic" style="left:96.8px;top:491px" width="12.4" height="12.4" viewBox="0 0 14 14"><rect x="2" y="1.5" width="9" height="7" fill="#3d6fc4" stroke="#dfe6f5" stroke-width="1"/><rect x="5" y="9" width="3" height="2" fill="#c8d0e0"/><circle cx="10.5" cy="10.5" r="2.5" fill="#4caf50"/></svg>
<svg class="ic" style="left:119.8px;top:491px" width="12.4" height="12.4" viewBox="0 0 14 14"><path d="M8.5 1c1 2.5-3.5 4-3.5 7.5 0 2 1.3 3.5 3 3.5s3-1.3 3-3.2c0-1.6-1-2.3-1-3.6-1.2 1-.8 2.6-1.5 2.8-.9-.5.8-3.8 0-7z" fill="#fff"/><path d="M4.5 4.5c-1.5 1.5-2 3-2 4.5 0 1.5.8 2.6 2 3-1-2-1-4.5 0-7.5z" fill="#fff"/></svg>
<svg class="ic" style="left:142.8px;top:491px" width="12.4" height="12.4" viewBox="0 0 14 14"><ellipse cx="6.5" cy="8" rx="5.5" ry="4.5" fill="#d9c9a8"/><circle cx="4" cy="7" r="1.2" fill="#e04a3a"/><circle cx="6.5" cy="5.8" r="1.2" fill="#3c8ad8"/><circle cx="9" cy="7" r="1.2" fill="#4caf50"/><path d="M7.5 9.5l5-8" stroke="#f0a030" stroke-width="1.4"/></svg>
<svg class="ic" style="left:164.8px;top:491px" width="12.4" height="12.4" viewBox="0 0 14 14"><rect x="2" y="1.5" width="10" height="11" fill="#4aa0dc"/><rect x="3.5" y="3.5" width="7" height="7" fill="#f08a24"/><path d="M6 5l3 2-3 2z" fill="#fff"/></svg>
<svg class="ic" style="left:187.8px;top:491px" width="12.4" height="12.4" viewBox="0 0 14 14"><circle cx="7" cy="7.5" r="4.6" fill="none" stroke="#3fb4f0" stroke-width="2.2"/><path d="M3 7.6h8.5" stroke="#3fb4f0" stroke-width="1.8"/><path d="M1 5c2-4.5 9-5.5 12-2.5" fill="none" stroke="#f2c230" stroke-width="1.1"/><rect x="8" y="8.6" width="5" height="2.5" fill="#101010"/></svg>
<svg class="ic" style="left:210.8px;top:491px" width="12.4" height="12.4" viewBox="0 0 14 14"><rect x="6" y="3" width="7" height="8" fill="#5aa7e8"/><rect x="1" y="2" width="7.5" height="10" fill="#0f6cbd"/><circle cx="4.7" cy="7" r="2" fill="none" stroke="#fff" stroke-width="1.1"/><path d="M8.5 5.5l2.2 1.8 2.3-1.8v4h-4.5z" fill="#fff"/></svg>
<svg class="ic" style="left:233.8px;top:491px" width="12.4" height="12.4" viewBox="0 0 14 14"><rect x="6" y="2.5" width="7" height="9" fill="#cfe8d6" stroke="#1e7145" stroke-width=".6"/><rect x="1" y="2" width="7.5" height="10" fill="#1e7145"/><path d="M3 4.5l3.5 5M6.5 4.5l-3.5 5" stroke="#fff" stroke-width="1.1"/></svg>
<svg class="ic" style="left:256.8px;top:491px" width="12.4" height="12.4" viewBox="0 0 14 14"><rect x="6" y="2.5" width="7" height="9" fill="#cfe8cf" stroke="#31752f" stroke-width=".6"/><rect x="1" y="2" width="7.5" height="10" fill="#31752f"/><path d="M3.5 10v-5.5h2c1.5 0 1.5 2.8 0 2.8h-2" fill="none" stroke="#fff" stroke-width="1.1"/></svg>
<svg class="ic" style="left:279.8px;top:491px" width="12.4" height="12.4" viewBox="0 0 14 14"><rect x="6" y="2.5" width="7" height="9" fill="#d4def2" stroke="#2b579a" stroke-width=".6"/><rect x="1" y="2" width="7.5" height="10" fill="#2b579a"/><path d="M2.5 4.5l1.2 5 1.1-4 1.1 4 1.2-5" fill="none" stroke="#fff" stroke-width=".9"/></svg>
<svg class="ic" style="left:302.8px;top:491px" width="12.4" height="12.4" viewBox="0 0 14 14"><rect x="6" y="2.5" width="7" height="9" fill="#f6d5cc" stroke="#d24726" stroke-width=".6"/><rect x="1" y="2" width="7.5" height="10" fill="#d24726"/><path d="M3.5 10v-5.5h2c1.5 0 1.5 2.8 0 2.8h-2" fill="none" stroke="#fff" stroke-width="1.1"/></svg>
<svg class="ic" style="left:325.8px;top:491px" width="12.4" height="12.4" viewBox="0 0 14 14"><rect x="1" y="1.5" width="12" height="11.5" fill="#f39a1e"/><path d="M3 9.5l4-1.6 4 1.6-4 1.6zM3 7.5l4-1.6 4 1.6M3 5.5l4-1.6 4 1.6" fill="#fff" stroke="#fff" stroke-width=".6" fill-opacity=".9"/></svg>
<svg class="ic" style="left:348.8px;top:491px" width="12.4" height="12.4" viewBox="0 0 14 14"><rect x="1" y="1.5" width="12" height="11.5" fill="#d8241f"/><path d="M3 11c2-1 3.5-5 3.8-8 .5 3.5 2.2 6.5 4.5 7.5-3-.8-5.5-.5-8.3.5z" fill="none" stroke="#fff" stroke-width="1.1"/></svg>
<svg class="ic" style="left:372.3px;top:491px" width="12.4" height="12.4" viewBox="0 0 14 14"><rect x="1" y="1" width="12" height="12" fill="#2aa79b"/><circle cx="7" cy="6.5" r="4" fill="#efefef" stroke="#222" stroke-width="1.2"/></svg>
<svg class="ic" style="left:800px;top:489px" width="100" height="17" viewBox="0 0 100 17"><path d="M3 9.5l2.2-2.2 2.2 2.2" fill="none" stroke="#fff" stroke-width=".8"/><rect x="12.5" y="6.8" width="6.5" height="3.8" fill="#e8e8e8"/><rect x="13.5" y="5.8" width="2" height="1.2" fill="#e8e8e8"/><path d="M23.5 5.5h6v4.5h-6zM25 12h3" fill="none" stroke="#fff" stroke-width=".8"/><path d="M35 7.5h1.5l2-1.8v5.6l-2-1.8h-1.5zM40 6.5c1 1 1 3 0 4M41.5 5.5c1.5 1.5 1.5 4.5 0 6" fill="none" stroke="#fff" stroke-width=".7"/><path d="M81.5 5h7v5.5h-4l-1.5 1.5v-1.5h-1.5z" fill="none" stroke="#fff" stroke-width=".8"/><path d="M96.5 0v17" stroke="#777" stroke-width=".6"/></svg>
<span class="tray" style="left:853.7px;top:491px">20:10</span>
<span class="tray" style="left:847.6px;top:498.6px">23.12.2018</span>
</body></html>
